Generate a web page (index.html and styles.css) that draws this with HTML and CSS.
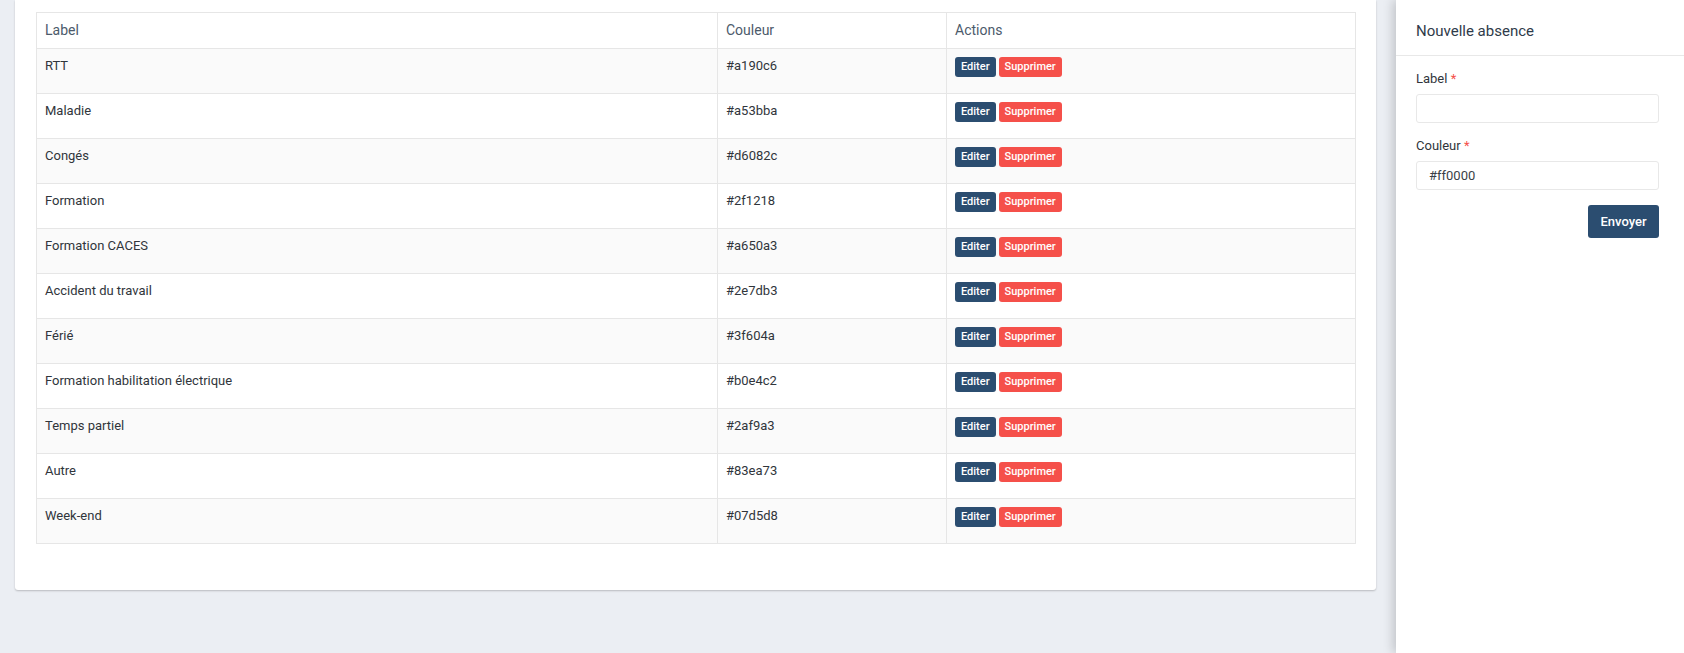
FILE: index.html
```html
<!DOCTYPE html>
<html lang="fr">
<head>
    <meta charset="UTF-8">
    <meta name="viewport" content="width=device-width, initial-scale=1.0">
    <title>Absences</title>
    <link rel="stylesheet" href="styles.css">
</head>
<body>
    <div class="layout">
        <main class="content">
            <div class="card">
                <table class="table">
                    <thead>
                        <tr>
                            <th class="col-label">Label</th>
                            <th class="col-color">Couleur</th>
                            <th>Actions</th>
                        </tr>
                    </thead>
                    <tbody>
                        <tr><td>RTT</td><td>#a190c6</td><td><div class="actions"><button class="btn btn-edit">Editer</button><button class="btn btn-delete">Supprimer</button></div></td></tr>
                        <tr><td>Maladie</td><td>#a53bba</td><td><div class="actions"><button class="btn btn-edit">Editer</button><button class="btn btn-delete">Supprimer</button></div></td></tr>
                        <tr><td>Congés</td><td>#d6082c</td><td><div class="actions"><button class="btn btn-edit">Editer</button><button class="btn btn-delete">Supprimer</button></div></td></tr>
                        <tr><td>Formation</td><td>#2f1218</td><td><div class="actions"><button class="btn btn-edit">Editer</button><button class="btn btn-delete">Supprimer</button></div></td></tr>
                        <tr><td>Formation CACES</td><td>#a650a3</td><td><div class="actions"><button class="btn btn-edit">Editer</button><button class="btn btn-delete">Supprimer</button></div></td></tr>
                        <tr><td>Accident du travail</td><td>#2e7db3</td><td><div class="actions"><button class="btn btn-edit">Editer</button><button class="btn btn-delete">Supprimer</button></div></td></tr>
                        <tr><td>Férié</td><td>#3f604a</td><td><div class="actions"><button class="btn btn-edit">Editer</button><button class="btn btn-delete">Supprimer</button></div></td></tr>
                        <tr><td>Formation habilitation électrique</td><td>#b0e4c2</td><td><div class="actions"><button class="btn btn-edit">Editer</button><button class="btn btn-delete">Supprimer</button></div></td></tr>
                        <tr><td>Temps partiel</td><td>#2af9a3</td><td><div class="actions"><button class="btn btn-edit">Editer</button><button class="btn btn-delete">Supprimer</button></div></td></tr>
                        <tr><td>Autre</td><td>#83ea73</td><td><div class="actions"><button class="btn btn-edit">Editer</button><button class="btn btn-delete">Supprimer</button></div></td></tr>
                        <tr><td>Week-end</td><td>#07d5d8</td><td><div class="actions"><button class="btn btn-edit">Editer</button><button class="btn btn-delete">Supprimer</button></div></td></tr>
                    </tbody>
                </table>
            </div>
        </main>

        <aside class="sidebar">
            <div class="sidebar-header">Nouvelle absence</div>
            <form class="sidebar-form">
                <div class="field">
                    <label for="label">Label <span class="required">*</span></label>
                    <input type="text" id="label">
                </div>
                <div class="field">
                    <label for="couleur">Couleur <span class="required">*</span></label>
                    <input type="text" id="couleur" value="#ff0000">
                </div>
                <div class="form-actions">
                    <button type="button" class="btn-submit">Envoyer</button>
                </div>
            </form>
        </aside>
    </div>
</body>
</html>
```

FILE: styles.css
```css
* {
    box-sizing: border-box;
}

html, body {
    height: 100%;
}

body {
    margin: 0;
    font-family: Roboto, 'Liberation Sans', Arial, sans-serif;
    font-size: 13px;
    color: #333840;
    background-color: #ebeef3;
    overflow: hidden;
}

.layout {
    display: flex;
    height: 100%;
}

.content {
    width: 1396px;
    padding: 0 20px 0 15px;
}

.card {
    background: #fff;
    border-radius: 0 0 3px 3px;
    box-shadow: 0 1px 2px rgba(0, 0, 0, 0.22);
    padding: 12px 20px 46px 21px;
}

.table {
    width: 100%;
    border-collapse: collapse;
    border: 1px solid #e6e6e6;
}

.table th,
.table td {
    border: 1px solid #e6e6e6;
    text-align: left;
    vertical-align: top;
    padding: 8px 8px;
}

.table th {
    height: 36px;
    font-weight: 400;
    font-size: 14px;
    color: #4c5a6b;
    line-height: 19px;
}

.table td {
    height: 45px;
    padding-top: 7px;
    line-height: 19px;
    color: #30353b;
}

.table tbody tr:nth-child(odd) td {
    background-color: #fafafa;
}

.col-label {
    width: 681px;
}

.col-color {
    width: 229px;
}

.actions {
    display: flex;
    gap: 3px;
    padding-top: 1px;
}

.btn {
    border: none;
    border-radius: 3px;
    color: #fff;
    font-family: inherit;
    font-size: 11px;
    font-weight: 500;
    height: 20px;
    line-height: 20px;
    padding: 0 6px;
    cursor: pointer;
}

.btn-edit {
    background-color: #2b4d70;
}

.btn-delete {
    background-color: #f5504a;
}

.sidebar {
    flex: 1;
    background: #fff;
    box-shadow: -3px 0 10px rgba(0, 0, 0, 0.18);
}

.sidebar-header {
    height: 56px;
    padding: 22px 20px 0;
    font-size: 15px;
    color: #2f3b4a;
    border-bottom: 1px solid #e8e8e8;
}

.sidebar-form {
    padding: 14px 25px 0 20px;
}

.field {
    display: flex;
    flex-direction: column;
    margin-bottom: 14px;
}

.field label {
    font-size: 13px;
    color: #30353b;
    line-height: 18px;
    margin-bottom: 6px;
}

.required {
    color: #f5504a;
}

.field input {
    height: 29px;
    border: 1px solid #e8e8e8;
    border-radius: 3px;
    padding: 0 12px;
    font-family: inherit;
    font-size: 13px;
    color: #3a3f46;
    outline: none;
}

.form-actions {
    display: flex;
    justify-content: flex-end;
    padding-top: 1px;
}

.btn-submit {
    background-color: #2b4d70;
    color: #fff;
    border: none;
    border-radius: 3px;
    height: 33px;
    width: 71px;
    font-family: inherit;
    font-size: 13px;
    font-weight: 500;
    cursor: pointer;
}
```
